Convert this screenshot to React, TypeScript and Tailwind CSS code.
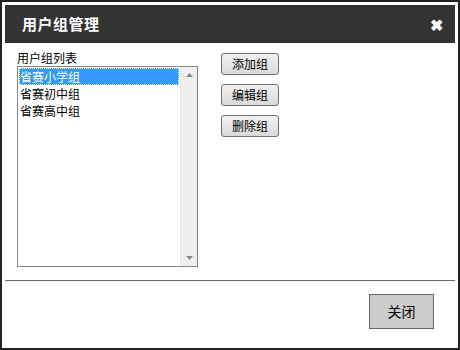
import React from "react";

const font = { fontFamily: '"Noto Sans CJK SC", "Liberation Sans", sans-serif' };

function Btn({ children }: { children: React.ReactNode }) {
  return (
    <div className="w-[58px] h-[22px] rounded-[3px] border border-[#707070] bg-gradient-to-b from-[#f2f2f2] to-[#d9d9d9] flex items-center justify-center text-[12px] text-black leading-none">
      {children}
    </div>
  );
}

export default function App() {
  const items = ["省赛小学组", "省赛初中组", "省赛高中组"];
  return (
    <div style={font} className="w-[460px] h-[350px] bg-white border-2 border-[#222] p-[3px] flex flex-col">
      <div className="h-[38px] bg-[#333333] flex items-center justify-between pl-[17px] pr-[12px] shrink-0">
        <span className="text-white text-[15px] font-bold tracking-[0.5px]">用户组管理</span>
        <span className="text-white text-[16px] font-black leading-none">✖</span>
      </div>
      <div className="flex pl-[12px] pt-[5px] h-[232px]">
        <div className="flex flex-col">
          <div className="text-[12px] leading-[20px] text-black h-[18px]">用户组列表</div>
          <div className="w-[181px] h-[201px] border border-[#828790] flex">
            <div className="flex-1 pt-[1px] pl-[1px] pr-[1px]">
              {items.map((t, i) => (
                <div
                  key={t}
                  className={
                    i === 0
                      ? "h-[17px] bg-[#3399ff] text-white text-[12px] leading-[16px] pl-0 border border-dotted border-white"
                      : "h-[17px] text-black text-[12px] leading-[17px] pl-[1px]"
                  }
                >
                  {t}
                </div>
              ))}
            </div>
            <div className="w-[17px] bg-[#efefef] border-l border-[#e4e4e4] flex flex-col justify-between items-center py-[6px]">
              <svg width="7" height="4" viewBox="0 0 7 4"><path d="M0 4 L3.5 0 L7 4 Z" fill="#8a8a8a" /></svg>
              <svg width="7" height="4" viewBox="0 0 7 4"><path d="M0 0 L7 0 L3.5 4 Z" fill="#8a8a8a" /></svg>
            </div>
          </div>
        </div>
        <div className="flex flex-col gap-[9px] ml-[23px] pt-[5px]">
          <Btn>添加组</Btn>
          <Btn>编辑组</Btn>
          <Btn>删除组</Btn>
        </div>
      </div>
      <div className="h-px bg-[#6a6a6a] mt-[5px]" />
      <div className="flex justify-end pr-[21px] pt-[13px]">
        <div className="w-[65px] h-[35px] bg-[#cccccc] border border-[#666] flex items-center justify-center text-[14px] text-black">
          关闭
        </div>
      </div>
    </div>
  );
}
